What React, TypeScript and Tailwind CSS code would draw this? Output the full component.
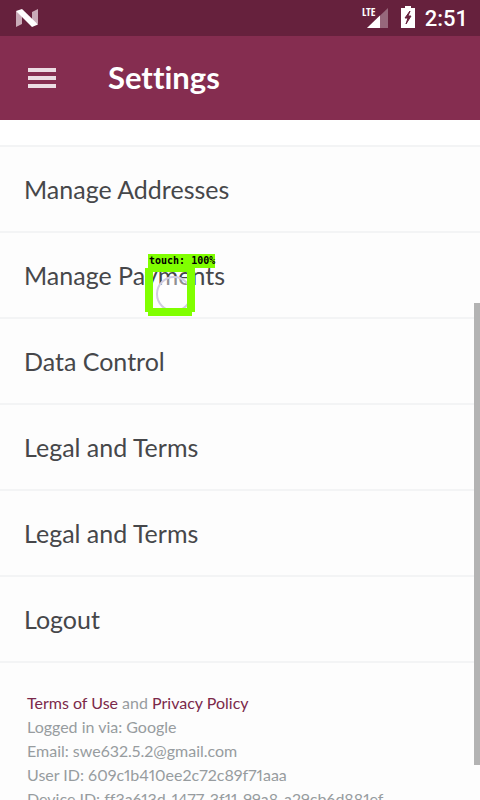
const items = [
  'Manage Addresses',
  'Manage Payments',
  'Data Control',
  'Legal and Terms',
  'Legal and Terms',
  'Logout',
];

function NougatLogo() {
  return (
    <svg className="h-5 w-6" viewBox="0 0 24 20" aria-hidden="true">
      <path d="M1 3 L7 6 V16 L1 19 Z" fill="#c9abb8" />
      <path d="M17 4 L23 1 V16 L17 14 Z" fill="#c9abb8" />
      <path d="M1 3 L7 1 L23 16.5 L17 19 Z" fill="#ffffff" />
    </svg>
  );
}

function SignalIcon() {
  return (
    <svg className="h-6 w-7 overflow-visible" viewBox="0 0 28 24" aria-label="LTE signal" role="img">
      <path d="M26 3 V23 H5 Z" fill="#97687c" />
      <path d="M18 10.6 V23 H5 Z" fill="#ffffff" />
      <path d="M0 0 H14 V12 H0 Z" fill="#66213d" />
      <text x="0" y="11" fontSize="11" fontWeight="700" fill="#ffffff" fontFamily="'Open Sans Condensed', 'Liberation Sans Narrow', sans-serif">
        LTE
      </text>
    </svg>
  );
}

function BatteryIcon() {
  return (
    <svg className="h-[22px] w-3.5" viewBox="0 0 14 22" aria-hidden="true">
      <path d="M4 0 H10 V2 H14 V22 H0 V2 H4 Z" fill="#ffffff" />
      <path d="M9 5 L4 12 H7 L5 18 L10 10 H7 Z" fill="#66213d" stroke="#66213d" />
    </svg>
  );
}

function TouchMarker() {
  return (
    <div className="pointer-events-none absolute top-[21px] left-[145px] w-[70px]">
      <div className="ml-[3px] h-3.5 bg-[#80ff00] pl-px font-['DejaVu_Sans_Mono',monospace] text-[10px] leading-[14px] font-bold whitespace-nowrap text-black">
        touch: 100%
      </div>
      <div className="relative h-10 w-[50px] overflow-hidden border-x-8 border-t-4 border-[#80ff00]">
        <div className="absolute top-1 left-[3px] h-9 w-9 rounded-full border-2 border-[#d0cbe0] bg-white/40" />
      </div>
      <div className="h-1 w-[50px] bg-[#80ff00]" />
      <div className="ml-[3px] h-1 w-11 bg-[#80ff00]" />
    </div>
  );
}

export default function App() {
  return (
    <div className="flex h-screen flex-col overflow-hidden bg-[#fdfdfd] font-['Lato',sans-serif] text-[#46474a] [font-variant-ligatures:none]">
      <div className="flex h-9 shrink-0 items-center bg-[#66213d] pr-3 pl-[15px] text-white">
        <NougatLogo />
        <div className="ml-auto flex items-center gap-[11px] pr-2.5 pb-0.5">
          <SignalIcon />
          <BatteryIcon />
        </div>
        <span className="pt-0.5 font-['Roboto',sans-serif] text-[22px] leading-8 font-medium">2:51</span>
      </div>

      <header className="flex h-21 shrink-0 items-center bg-[#852d50] pl-7 text-white">
        <button type="button" aria-label="Open menu" className="flex w-7 flex-col gap-1">
          <span className="h-1 bg-[#ecdce3]" />
          <span className="h-1 bg-[#ecdce3]" />
          <span className="h-1 bg-[#ecdce3]" />
        </button>
        <h1 className="ml-[52px] pb-0.5 text-[31px] leading-9 font-bold">Settings</h1>
      </header>

      <main className="relative min-h-0 flex-1 overflow-hidden">
        <div className="h-[27px] border-b-2 border-[#f3f4f5] bg-white" />
        <nav aria-label="Settings">
          {items.map((item, index) => (
            <div key={index} className="relative border-b-2 border-[#f3f4f5]">
              <button type="button" className="block h-21 w-full px-6 text-left text-[25px] leading-8">
                {item}
              </button>
              {index === 1 && <TouchMarker />}
            </div>
          ))}
        </nav>
        <footer className="px-[27px] pt-7 text-base leading-6 text-[#979c9f] proportional-nums">
          <p>
            <a href="#terms" className="text-[#7b294a]">Terms of Use</a> and{' '}
            <a href="#privacy" className="text-[#7b294a]">Privacy Policy</a>
          </p>
          <p>Logged in via: Google</p>
          <p>Email: swe632.5.2@gmail.com</p>
          <p>User ID: 609c1b410ee2c72c89f71aaa</p>
          <p className="whitespace-nowrap">Device ID: ff3a613d-1477-3f11-99a8-a29cb6d881ef</p>
        </footer>
        <div className="absolute top-[183px] right-0 h-[462px] w-1.5 bg-[#b3b3b3]" />
      </main>
    </div>
  );
}
